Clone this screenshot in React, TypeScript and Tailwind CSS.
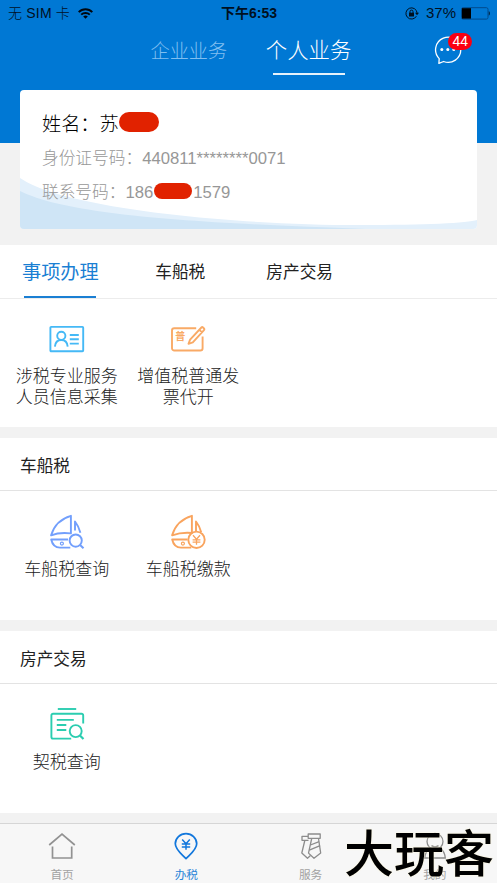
import React from "react";

const SANS = "font-['Liberation_Sans','Noto_Sans_CJK_SC',sans-serif]";

function WifiIcon() {
  return (
    <svg width="15" height="11" viewBox="0 0 15 11" fill="none" stroke="#00070f" strokeWidth="1.9">
      <path d="M0.7 4.1a9.6 9.6 0 0 1 13.6 0" />
      <path d="M3.2 6.7a6.1 6.1 0 0 1 8.6 0" />
      <path d="M7.5 10.8 5.2 8.5a3.3 3.3 0 0 1 4.6 0Z" fill="#00070f" stroke="none" />
    </svg>
  );
}

function LockIcon() {
  return (
    <svg width="14" height="13" viewBox="0 0 14 13" fill="none" stroke="#00101f" strokeWidth="1">
      <path d="M11.4 9.2A5.6 5.6 0 1 1 12.1 6" />
      <path d="M10 5.8h4L12 8.2Z" fill="#00101f" stroke="none" />
      <rect x="4" y="5.7" width="5" height="3.8" fill="#00101f" stroke="none" />
      <path d="M5 6V4.6a1.5 1.5 0 0 1 3 0V6" />
    </svg>
  );
}

function BatteryIcon() {
  return (
    <svg width="30" height="13" viewBox="0 0 30 13" fill="none">
      <rect x="0.5" y="0.7" width="26.5" height="11.4" rx="1.6" stroke="#004b8c" />
      <rect x="1" y="1.2" width="9" height="10.4" fill="#000" />
      <path d="M27.8 4.3c1.3.4 1.3 3.8 0 4.2Z" fill="#00101f" />
    </svg>
  );
}

function ChatIcon() {
  return (
    <svg width="28" height="29" viewBox="0 0 28 29" fill="none" stroke="#fff" strokeWidth="1.3">
      <path d="M5.2 22.6A12.6 12.6 0 1 1 9.6 25.5L4.9 27.4Z" strokeLinejoin="round" />
      <g fill="#fff" stroke="none">
        <circle cx="7.8" cy="13.4" r="1.5" />
        <circle cx="13.8" cy="13.4" r="1.5" />
        <circle cx="19.8" cy="13.4" r="1.5" />
      </g>
    </svg>
  );
}

function IdCardIcon() {
  return (
    <svg width="36" height="28" viewBox="0 0 36 28" fill="none" stroke="#45b9f6" strokeWidth="1.9">
      <rect x="1.4" y="1.9" width="32.8" height="24.4" rx="0.8" />
      <circle cx="12.3" cy="10.8" r="4.1" />
      <path d="M5.9 21.6c.4-4.2 2.8-6.6 6.4-6.6s6 2.4 6.4 6.6" />
      <path d="M20.8 10h9M20.8 14.3h9M20.8 18.6h9" />
    </svg>
  );
}

function InvoiceIcon() {
  return (
    <div className="relative h-[28px] w-[36px]">
      <svg width="36" height="28" viewBox="0 0 36 28" fill="none" stroke="#f9aa66" strokeWidth="1.9">
        <path d="M26.2 3.2H4.3A2.3 2.3 0 0 0 2 5.5v17.7a2.3 2.3 0 0 0 2.3 2.3h26a2.3 2.3 0 0 0 2.3-2.3V11.4" />
        <path d="m18.5 18.8 1.6-4.2L31.4 2.5c.5-.5 1.1-.5 1.6 0l1 1c.5.5.5 1.1 0 1.6L22.8 17.4ZM29.4 4.8l2.6 2.6" strokeLinejoin="round" />
      </svg>
      <span className="absolute top-[6px] left-[5px] text-[10px] leading-[12px] font-bold text-[#f9aa66]">普</span>
    </div>
  );
}

function BoatSearchIcon() {
  return (
    <svg width="36" height="36" viewBox="0 0 36 36" fill="none" stroke="#729ffc" strokeWidth="1.9" strokeLinejoin="round">
      <path d="M21.9 1.8v17.6c-7-.9-13.5-.5-19.8 1.9C5 11.5 12 4.6 21.9 1.8Z" />
      <path d="M26 16.5V7.5c2.5 3.2 4.3 7 5.4 11.2" />
      <path d="M19 25.5H2.2c1.1 5 4 8.1 8.8 8.1h10.3" />
      <circle cx="12.9" cy="29.6" r="1.5" strokeWidth="1.2" />
      <circle cx="26.7" cy="26.6" r="6.1" />
      <path d="m31.1 31 3.4 3.2" strokeWidth="2.1" />
    </svg>
  );
}

function BoatPayIcon() {
  return (
    <svg width="36" height="36" viewBox="0 0 36 36" fill="none" stroke="#f9a45e" strokeWidth="1.9" strokeLinejoin="round">
      <path d="M21.9 1.8v17.2c-7-.6-13.5.1-19.8 2.3C5 11.5 12 4.6 21.9 1.8Z" />
      <path d="M26 17V7.5c2.5 3.2 4.3 7 5.2 10.8" />
      <path d="M17.5 25.5H2.2c1.1 5 4 8.1 8.8 8.1h10.3" />
      <circle cx="12.9" cy="29.6" r="1.5" strokeWidth="1.2" />
      <circle cx="26.5" cy="25.8" r="8.2" />
      <path d="m23 21.3 3.5 4 3.5-4M26.5 25.3v5.5M22.6 25.8h7.8M22.6 28.2h7.8" strokeWidth="1.3" />
    </svg>
  );
}

function DeedIcon() {
  return (
    <svg width="36" height="34" viewBox="0 0 36 34" fill="none" stroke="#2bcdb0" strokeWidth="1.9">
      <path d="M8.8 2h18.4" />
      <path d="M22.2 31.6H4a1.6 1.6 0 0 1-1.6-1.6V8.4A1.6 1.6 0 0 1 4 6.8h28.6a1.6 1.6 0 0 1 1.6 1.6v8.2" />
      <path d="M7.8 12.9h17M7.8 18h9.5M7.8 23h9.5" />
      <circle cx="26.7" cy="24.1" r="6" />
      <path d="m31 28.5 3.5 3.5" strokeWidth="2.2" />
    </svg>
  );
}

function HomeIcon() {
  return (
    <svg width="28" height="28" viewBox="0 0 28 28" fill="none" stroke="#929292" strokeWidth="1.7">
      <path d="M1.2 13 14 2l12.8 11" />
      <path d="M4.5 14.5V26h19.2V14.5" />
    </svg>
  );
}

function PinIcon() {
  return (
    <svg width="28" height="28" viewBox="0 0 28 28" fill="none" stroke="#1277dc" strokeWidth="1.7" strokeLinejoin="round">
      <path d="M14 26.7C9 21.5 3.3 17.5 3.3 11.8a10.7 10.2 0 0 1 21.4 0c0 5.700-5.700 9.700-10.700 14.900Z" />
      <path d="m10.200 7.500 3.800 4.300 3.800-4.300M14 11.800v6M9.800 12h8.400M9.800 14.900h8.400" strokeWidth="1.5" />
    </svg>
  );
}

function TieIcon() {
  return (
    <svg width="28" height="28" viewBox="0 0 28 28" fill="none" stroke="#8c8c8c" strokeWidth="1.3" strokeLinejoin="round">
      <path d="M11.200 2h12v4.300h-12ZM11.200 4.300H5v4h6.500M14.700 6.500l-3.200 14.600 5.500 5.200 6.700-5.200-2.200-14.600" />
      <path d="m13.400 13 8.700-3.400M12.300 18.200l10.800-4.600" />
      <path d="M7.800 8.500 4.800 21l5.700 5.300 3-2.700" />
    </svg>
  );
}

function PersonIcon() {
  return (
    <svg width="28" height="28" viewBox="0 0 28 28" fill="none" stroke="#8c8c8c" strokeWidth="1.3">
      <circle cx="14" cy="9.5" r="8" />
      <path d="M10.5 13.600q3.500 2.400 7 0M8.800 16C6 18 4.200 21 3.700 26h20.600c-.5-5-2.300-8-5.100-10" />
    </svg>
  );
}

function Service({ icon, lines, compact }: { icon: React.ReactNode; lines: string[]; compact?: boolean }) {
  return (
    <div className="flex w-[121.5px] flex-col items-center">
      <div className={compact ? "h-[42px]" : "h-[46px]"}>{icon}</div>
      <div className="text-center text-[17px] leading-[20.5px] font-light whitespace-nowrap text-[#222]">
        {lines.map((l) => (
          <div key={l}>{l}</div>
        ))}
      </div>
    </div>
  );
}

function Section({ title, children }: { title: string; children: React.ReactNode }) {
  return (
    <section className="h-[182px] bg-white">
      <h2 className="flex h-[53px] items-center border-b border-[#e3e3e3] pt-[5px] pl-5 text-[16.7px] font-normal text-[#222]">{title}</h2>
      <div className="flex pt-[23px] pl-[6px]">{children}</div>
    </section>
  );
}

function NavItem({ icon, label, active }: { icon: React.ReactNode; label: string; active?: boolean }) {
  return (
    <div className={`flex flex-1 flex-col items-center pt-[8px] text-[11.7px] leading-[16px] ${active ? "text-[#2a85d8]" : "text-[#a2a2a2]"}`}>
      {icon}
      <span className="mt-[7px]">{label}</span>
    </div>
  );
}

export default function App() {
  return (
    <div className={`relative flex h-[883px] w-[497px] flex-col overflow-hidden bg-[#f2f2f2] ${SANS}`}>
      <header className="h-[143px] shrink-0 bg-[#0078d4]">
        <div className="grid h-[26px] grid-cols-3 items-center px-2 text-[14px] text-[#00101f]">
          <div className="flex items-center gap-[8px] font-light">
            <span className="tracking-[0.2px]">无 SIM 卡</span>
            <WifiIcon />
          </div>
          <div className="pl-[1px] text-center font-bold">下午6:53</div>
          <div className="-mr-[2px] flex items-center justify-end">
            <LockIcon />
            <span className="ml-[7px] text-[15px]">37%</span>
            <span className="ml-[5px]">
              <BatteryIcon />
            </span>
          </div>
        </div>
        <div className="flex h-[50px] pl-[150.5px]">
          <div className="pt-[11px] text-[19.2px] leading-[30px] font-light text-[#80bff0]">企业业务</div>
          <div className="ml-[38.5px] flex flex-col items-center pt-[10px] text-[21.4px] leading-[30px] font-light text-white">
            个人业务
            <span className="mt-[7px] h-[1.5px] w-[72px] bg-white/90" />
          </div>
          <div className="relative mt-[10px] ml-[83px] h-[29px] w-[28px]">
            <ChatIcon />
            <span className="absolute -top-[3px] left-[14px] h-[17px] w-[24px] rounded-full bg-[#fb0011] text-center text-[14px] leading-[17px] text-white">44</span>
          </div>
        </div>
      </header>

      <section className="relative mx-5 -mt-[53px] h-[139px] shrink-0 overflow-hidden rounded-[4px] bg-white">
        <svg className="absolute inset-0" width="457" height="139" viewBox="0 0 457 139">
          <path d="M0 88C45 119 215 135 340 135 405 135 448 133 457 130V139H0Z" fill="#e3f0fb" />
          <path d="M0 101C50 126 180 133 346 139H0Z" fill="#cfe5f6" />
        </svg>
        <div className="relative pt-[19px] pl-[22px]">
          <div className="flex h-[32px] items-center text-[19.2px] text-black">
            <span className="w-[77px] font-light">姓名：苏</span>
            <span className="-mt-[6px] h-[20px] w-[40px] rounded-full bg-[#e12200]" />
          </div>
          <div className="mt-[6px] flex h-[24px] items-center text-[16.7px] text-[#979797]">
            <span className="font-light">身份证号码：</span>
            <span>440811********0071</span>
          </div>
          <div className="mt-[10px] flex h-[24px] items-center text-[16.7px] text-[#979797]">
            <span className="font-light">联系号码：</span>
            <span>186</span>
            <span className="-mt-[4px] ml-[1px] h-[16px] w-[38px] rounded-full bg-[#e12200]" />
            <span className="ml-[1px]">1579</span>
          </div>
        </div>
      </section>

      <main className="flex flex-col pt-4">
        <section className="h-[182px] bg-white">
          <div className="flex h-[54px] items-start border-b border-[#ececec] text-[16.7px] text-[#222]">
            <div className="ml-[22px] flex h-[53px] flex-col items-center text-[19.2px] leading-[30px] text-[#1a7fd3]">
              <span className="pt-[13px]">事项办理</span>
              <span className="mt-[8px] h-[1.5px] w-[72px] bg-[#1a7fd3]" />
            </div>
            <div className="ml-[56.5px] pt-[13px] leading-[30px]">车船税</div>
            <div className="ml-[61px] pt-[13px] leading-[30px]">房产交易</div>
          </div>
          <div className="flex pt-[26px] pl-[6px]">
            <Service compact icon={<IdCardIcon />} lines={["涉税专业服务", "人员信息采集"]} />
            <Service compact icon={<InvoiceIcon />} lines={["增值税普通发", "票代开"]} />
          </div>
        </section>
        <div className="h-[11px]" />
        <Section title="车船税">
          <Service icon={<BoatSearchIcon />} lines={["车船税查询"]} />
          <Service icon={<BoatPayIcon />} lines={["车船税缴款"]} />
        </Section>
        <div className="h-[11px]" />
        <Section title="房产交易">
          <Service icon={<DeedIcon />} lines={["契税查询"]} />
        </Section>
      </main>

      <nav className="mt-auto flex h-[60px] shrink-0 border-t border-[#d6d6d6] bg-[#f7f7f7]">
        <NavItem icon={<HomeIcon />} label="首页" />
        <NavItem icon={<PinIcon />} label="办税" active />
        <NavItem icon={<TieIcon />} label="服务" />
        <NavItem icon={<PersonIcon />} label="我的" />
      </nav>

      <div className="absolute top-[827px] left-[344px] text-[50px] leading-[56px] font-medium whitespace-nowrap text-black [text-shadow:0_0_2px_#fff6d0]">大玩客</div>
    </div>
  );
}
